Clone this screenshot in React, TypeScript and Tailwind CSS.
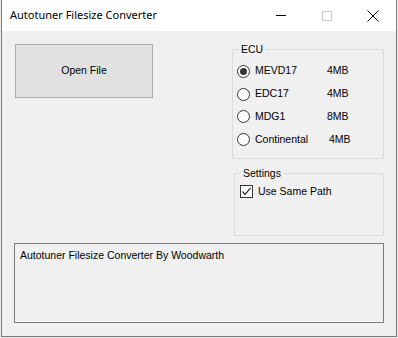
import React, { useState } from "react";

const ECUS = [
  { name: "MEVD17", size: "4MB", w: "w-[72px]", h: "h-[24px]" },
  { name: "EDC17", size: "4MB", w: "w-[72px]", h: "h-[22px]" },
  { name: "MDG1", size: "8MB", w: "w-[72px]", h: "h-[23px]" },
  { name: "Continental", size: "4MB", w: "w-[74px]", h: "h-[23px]" },
];

function Radio({ checked }: { checked: boolean }) {
  return (
    <span className="flex h-[13px] w-[13px] items-center justify-center rounded-full border border-[#333] bg-white">
      {checked && <span className="h-[7px] w-[7px] rounded-full bg-[#333]" />}
    </span>
  );
}

export default function App() {
  const [ecu, setEcu] = useState("MEVD17");
  const [samePath, setSamePath] = useState(true);

  return (
    <div className="h-[338px] w-[398px] bg-[#ececec] pl-[1px] font-['Liberation_Sans',Arial,sans-serif] text-[10.5px] text-black">
      <div className="flex h-[337px] w-[396px] flex-col border-x border-b border-[#7a7a7a]">
        {/* title bar */}
        <div className="flex h-[31px] items-center bg-white">
          <span className="ml-[8px] font-['Noto_Sans',sans-serif] text-[11px]">Autotuner Filesize Converter</span>
          <div className="ml-auto flex h-full items-center">
            <span className="flex w-[46px] justify-center">
              <span className="h-px w-[10px] bg-black" />
            </span>
            <span className="flex w-[46px] justify-center">
              <span className="h-[10px] w-[10px] border border-[#cccccc]" />
            </span>
            <span className="flex w-[46px] justify-center">
              <svg width="12" height="12" viewBox="0 0 12 12">
                <path d="M0.5 0.5 L11.5 11.5 M11.5 0.5 L0.5 11.5" stroke="#000" strokeWidth="1" />
              </svg>
            </span>
          </div>
        </div>

        {/* client area */}
        <div className="flex flex-1 flex-col bg-[#f0f0f0]">
          <div className="flex">
            <div className="pl-[13px] pt-[13px]">
              <button className="flex h-[54px] w-[138px] items-center justify-center border border-[#adadad] bg-[#e1e1e1]">
                Open File
              </button>
            </div>

            <div className="ml-[79px] flex flex-col pt-[12px]">
              <fieldset className="h-[116px] w-[152px] border border-[#dcdcdc]">
                <legend className="ml-[6px] px-[2px] leading-[13px]">ECU</legend>
                <div className="mt-[3px] flex flex-col pl-[4px]">
                  {ECUS.map((e) => (
                    <label key={e.name} className={`flex items-center ${e.h}`} onClick={() => setEcu(e.name)}>
                      <Radio checked={ecu === e.name} />
                      <span className={`ml-[5px] ${e.w}`}>{e.name}</span>
                      <span>{e.size}</span>
                    </label>
                  ))}
                </div>
              </fieldset>

              <fieldset className="ml-[2px] mt-[8px] h-[69px] w-[150px] border border-[#dcdcdc]">
                <legend className="ml-[6px] px-[2px] leading-[13px]">Settings</legend>
                <label className="mt-[4px] flex items-center pl-[5px]" onClick={() => setSamePath(!samePath)}>
                  <span className="flex h-[13px] w-[13px] items-center justify-center border border-[#333] bg-white">
                    {samePath && (
                      <svg width="11" height="11" viewBox="0 0 11 11">
                        <path d="M1.5 5.5 L4 8.5 L9.5 2" fill="none" stroke="#333" strokeWidth="1.2" />
                      </svg>
                    )}
                  </span>
                  <span className="ml-[5px]">Use Same Path</span>
                </label>
              </fieldset>
            </div>
          </div>

          <div className="ml-[12px] mt-[7px] h-[80px] w-[370px] border border-[#7a7a7a] px-[5px] py-[4px] shadow-[inset_0_-1px_0_#ffffff]">
            Autotuner Filesize Converter By Woodwarth
          </div>
        </div>
      </div>
    </div>
  );
}
